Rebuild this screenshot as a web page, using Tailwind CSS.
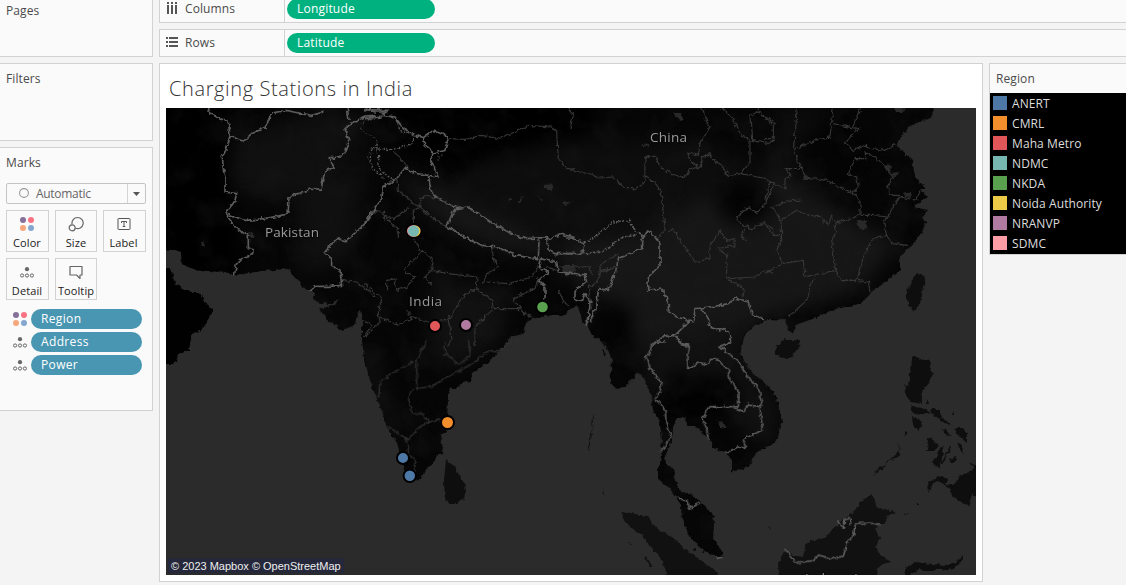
<!DOCTYPE html>
<html lang="en">
<head>
<meta charset="utf-8">
<title>Charging Stations in India</title>
<script src="https://cdn.jsdelivr.net/npm/@tailwindcss/browser@4"></script>
</head>
<body class="w-[1126px] h-[585px] overflow-hidden bg-[#f4f4f4] font-['Open_Sans','Noto_Sans',sans-serif] text-[12px] leading-4 text-[#4a4a4a]">
<svg class="hidden">
  <symbol id="dots4" viewBox="0 0 16 16"><circle cx="4" cy="4" r="3" fill="#85719a"/><circle cx="12" cy="4" r="3" fill="#fb7282"/><circle cx="4" cy="12" r="3" fill="#f5a77c"/><circle cx="12" cy="12" r="3" fill="#84a6cf"/></symbol>
  <symbol id="detail" viewBox="0 0 14 11"><circle cx="7" cy="2.2" r="2.1" fill="#666"/><g fill="none" stroke="#666"><circle cx="2.1" cy="8.5" r="1.6"/><circle cx="7" cy="8.5" r="1.6"/><circle cx="11.9" cy="8.5" r="1.6"/></g></symbol>
</svg>
<div class="flex h-full">
  <aside class="flex flex-col gap-1.5 w-[153px] shrink-0 tracking-[0.1px]">
    <section class="h-[57px] border-r border-b border-[#d2d2d2] bg-[#fafafa] pl-1.5 pt-[3px]">Pages</section>
    <section class="h-[78px] border border-l-0 border-[#d2d2d2] bg-[#fafafa] pl-1.5 pt-[7px]">Filters</section>
    <section class="h-[264px] border border-l-0 border-[#d2d2d2] bg-[#fafafa] pl-1.5 pt-[7px]">
      <h2>Marks</h2>
      <div class="mt-3 flex h-[21px] w-[140px] items-center rounded-xs border border-[#c4c4c4] text-[#666]">
        <svg class="ml-3 size-[11px]" viewBox="0 0 11 11"><circle cx="5" cy="5" r="4.4" fill="none" stroke="#999" stroke-width="1.1"/></svg>
        <span class="ml-1.5 flex-1 tracking-[-0.3px] pt-px">Automatic</span>
        <span class="flex h-full w-[18px] items-center justify-center border-l border-[#d4d4d4]"><svg class="w-[7px] h-1" viewBox="0 0 7 4"><path d="M0 0h7L3.5 4z" fill="#555"/></svg></span>
      </div>
      <div class="mt-1.5 grid grid-cols-[43px_42px_43px] gap-x-1.5 gap-y-1.5 text-[11px] text-[#222] text-center tracking-[0.1px]">
        <div class="h-[42px] border border-[#d2d2d2] flex flex-col items-center pt-[5px] pr-px"><svg class="size-4 shrink-0"><use href="#dots4"/></svg><span class="mt-[3px]">Color</span></div>
        <div class="h-[42px] border border-[#d2d2d2] flex flex-col items-center pt-[5px]"><svg class="size-4 shrink-0" viewBox="0 0 16 16" fill="none" stroke="#666" stroke-width="1.2"><path d="M4.1 8.3A5.6 5.6 0 1 1 7.5 12.3"/><circle cx="4.2" cy="11.8" r="3"/></svg><span class="mt-[3px]">Size</span></div>
        <div class="h-[42px] border border-[#d2d2d2] flex flex-col items-center pt-[5px] pr-[2px]"><svg class="size-4 shrink-0" viewBox="0 0 16 16" fill="none" stroke="#555"><rect x="2" y="2.5" width="12" height="11" rx=".6"/><path d="M5.5 7V5.5h5V7M8 5.5v5M6.7 10.5h2.6"/></svg><span class="mt-[3px]">Label</span></div>
        <div class="h-[42px] border border-[#d2d2d2] flex flex-col items-center pt-2 pr-px"><svg class="w-[14px] h-[11px] shrink-0"><use href="#detail"/></svg><span class="mt-[5px]">Detail</span></div>
        <div class="h-[42px] border border-[#d2d2d2] flex flex-col items-center pt-[5px]"><svg class="size-4 shrink-0" viewBox="0 0 16 16" fill="none" stroke="#666" stroke-width="1.2"><path d="M2 2.5h12v8.5h-2v3.5L8.5 11H2z" stroke-linejoin="round"/></svg><span class="mt-[3px]">Tooltip</span></div>
      </div>
      <div class="mt-[9px] flex flex-col gap-[3px] text-white font-medium tracking-[0.35px]">
        <div class="flex h-5 items-center"><svg class="ml-1.5 size-4"><use href="#dots4"/></svg><span class="ml-[3px] w-[111px] h-5 rounded-full bg-[#4996b2] pl-2.5 pt-[2px]">Region</span></div>
        <div class="flex h-5 items-center"><svg class="ml-[7px] mr-px w-[14px] h-[11px]"><use href="#detail"/></svg><span class="ml-[3px] w-[111px] h-5 rounded-full bg-[#4996b2] pl-2.5 pt-[2px]">Address</span></div>
        <div class="flex h-5 items-center"><svg class="ml-[7px] mr-px w-[14px] h-[11px]"><use href="#detail"/></svg><span class="ml-[3px] w-[111px] h-5 rounded-full bg-[#4996b2] pl-2.5 pt-[2px]">Power</span></div>
      </div>
    </section>
  </aside>
  <div class="ml-1.5 flex flex-1 flex-col">
    <div class="flex h-[23px] border-l border-b border-[#d2d2d2] bg-[#fafafa]">
      <div class="flex w-[125px] border-r border-[#d2d2d2] pt-px pl-[6px]"><svg class="mt-px size-3" viewBox="0 0 12 12" fill="#555"><path d="M1 0h2v2H1zM5 0h2v2H5zM9 0h2v2H9zM1 3h2v9H1zM5 3h2v9H5zM9 3h2v9H9z"/></svg><span class="ml-[7px] tracking-[0.1px]">Columns</span></div>
      <div class="ml-0.5 -mt-px h-5 w-[148px] rounded-full bg-[#00b180] pl-2.5 pt-[2px] font-medium tracking-[0.2px] text-white">Longitude</div>
    </div>
    <div class="mt-1.5 flex h-7 border border-r-0 border-[#d2d2d2] bg-[#fafafa]">
      <div class="flex w-[125px] border-r border-[#d2d2d2] pt-[5px] pl-1.5"><svg class="mt-[2px] w-3 h-[10px]" viewBox="0 0 12 10" fill="#555"><path d="M0 0h2v2H0zM0 4h2v2H0zM0 8h2v2H0zM3 0h9v2H3zM3 4h9v2H3zM3 8h9v2H3z"/></svg><span class="ml-[7px] tracking-[0.1px]">Rows</span></div>
      <div class="ml-0.5 mt-[3px] h-5 w-[148px] rounded-full bg-[#00b180] pl-2.5 pt-[2px] font-medium tracking-[0.2px] text-white">Latitude</div>
    </div>
    <div class="mt-1.5 flex">
      <main class="h-[519px] w-[824px] border border-[#d2d2d2] bg-white pl-1.5">
        <h1 class="h-11 pl-[3px] pt-[13px] text-[20px] font-light leading-6 tracking-[0.62px] text-[#333]">Charging Stations in India</h1>
        <div class="relative w-[810px] h-[467px]">
<svg class="block w-[810px] h-[467px]" viewBox="166 108 810 467">
<defs>
<filter id="rough" color-interpolation-filters="sRGB" filterUnits="userSpaceOnUse" x="160" y="100" width="822" height="482"><feTurbulence type="fractalNoise" baseFrequency=".22" numOctaves="2" seed="4"/><feDisplacementMap in="SourceGraphic" scale="5" xChannelSelector="R" yChannelSelector="G"/></filter>
<filter id="soft" color-interpolation-filters="sRGB" filterUnits="userSpaceOnUse" x="100" y="50" width="950" height="600"><feGaussianBlur stdDeviation="9"/></filter>
<filter id="relief" color-interpolation-filters="sRGB" filterUnits="userSpaceOnUse" x="166" y="108" width="810" height="467"><feTurbulence type="fractalNoise" baseFrequency=".035" numOctaves="4" seed="8"/><feColorMatrix values="0 0 0 0 .1  0 0 0 0 .1  0 0 0 0 .1  3 0 0 0 -1.35"/></filter>
<clipPath id="land"><use href="#mainland"/></clipPath>
<path id="mainland" d="M160 100V250H166L175 250 181 252 182 264 193 269 208 271 225 272 235 275 262 271 288 269 293 274 295 279 301 280 302 288 310 290 315 294 313 299 320 304 332 304 338 300 335 305 319 309 328 320 342 330 355 325 357 314 360 311 362 320 362 334 362 340 364 357 369 377 374 392 380 406 387 427 397 443 400 453 405 470 410 478 417 480 423 476 425 470 433 465 437 455 443 453 441 435 446 432 448 400 448 392 452 388 457 388 462 383 471 381 472 373 488 363 505 345 510 337 523 334 525 324 532 319 552 315 565 315 570 309 578 306 582 320 587 325 593 337 605 342 612 360 610 383 617 389 625 387 638 373 645 380 651 395 653 410 660 423 662 440 661 452 660 463 657 470 657 478 668 487 677 498 681 507 682 520 692 540 708 553 722 558 723 553 713 537 714 523 712 513 703 505 693 495 682 493 677 485 673 468 666 465 665 455 672 440 673 427 677 418 686 417 687 426 695 426 703 433 710 440 713 448 725 452 732 460 732 473 750 465 757 452 774 443 778 438 782 422 778 403 772 390 765 383 752 373 740 355 742 345 745 334 755 325 768 319 785 320 788 329 793 335 795 325 815 318 832 310 862 303 872 292 888 280 900 270 900 257 912 245 922 232 927 222 922 217 928 210 913 207 920 202 927 197 920 189 927 189 915 177 912 160 895 145 908 127 932 117 934 100Z"/>
</defs>
<rect x="160" y="100" width="820" height="480" fill="#2b2b2b"/>
<g filter="url(#rough)">
<use href="#mainland" fill="#060606"/>
<path fill="#010101" d="M160 262L172 272 175 283 185 290 200 294 206 303 213 309 210 316 202 330 192 334 189 350 178 354 176 362 173 364H160Z"/>
<g fill="#0e0e0e">
<path d="M446 460L450 463 455 467 460 477 465 485 466 492 463 500 457 504 449 504 445 499 444 480Z"/>
<path d="M917 274L926 276 922 292 920 303 914 313 907 302 907 292 911 282Z"/>
<path d="M776 346L784 340 800 340 799 347 792 356 784 359 776 355Z"/>
<g fill="#111"><path d="M621 511L640 515 648 516 658 529 675 539 684 548 693 555 705 563 718 573 716 580H668L664 565 659 555 650 547 643 535 633 530 625 522Z"/>
<path d="M779 580L778 562 785 553 803 557 806 542 824 538 838 524 854 512 862 500 872 495 877 508 886 509 896 513 887 517 885 523 875 528 880 539 876 547 881 555 891 562 879 565 876 580Z"/>
<path d="M644 557l3 1 6 8-3 1zM702 550h3v3h-3zM626 541l6 3-1 1zM768 526l3 3-1 2zM693 548h4v3h-4z"/></g>
<path d="M911 357L917 356 922 361 931 359 930 369 933 374 930 382 922 391 922 404 911 402 907 397 904 384 909 386 910 373Z"/>
<path d="M912 407l10 1 8 4-10 3-8-3zM912 417l8 2 2 8-4 3-5-6zM930 409l8 0 4 8 9 8-7-2-7-6-5-3zM955 428l8 0 4 6 0 9-6-5-4-4zM928 437l5 3 6 6-5 5-7 0zM940 448l4-2-2 11-3 12-7-7 5-5zM950 446l1 2-8 16-2-1zM949 459l7-2 0 4-5 1zM942 428l5 3 4 5-6-2zM957 442l4 1 3 11-3-2zM953 411l2 5-3 0zM926 399l2 4-2 1zM968 462l9 4v4z"/>
<path d="M873 475l8-8 8-6 11-11-2-7 2 12-10 6-8 8zM904 431l4 2-4 3z"/>
<path d="M929 493L928 483 936 478 942 476 948 480 946 484 954 485 960 475 970 472 978 464V500L972 493 969 505 958 502 952 495 950 488 940 482 933 483Z"/>
<path d="M905 575l2-10 10-3 14 2 18 1 7-3 7-7 0 4-8 9-17 2-18 0-9 4-3 7z"/>
<path d="M593 416l1 3-2 10-2 11-2 12 0-9 4-15zM603 490l2 3-1 2zM444 461l5 1v1zM905 513l3 0v1l-4 1zM917 504h2v1h-2z"/>
<path d="M602 341l3 4M603 350l2 5" stroke="#0b0b0b" stroke-width="2"/>
</g>
</g>
<g clip-path="url(#land)"><g filter="url(#soft)">
<path fill="#000" d="M140 90H225L235 215 240 275H160ZM390 100H600L580 140 460 170 400 145Z"/>
<path fill="#101010" d="M232 140L320 110 370 120 330 180 280 200 230 190ZM295 195L350 170 370 140 350 260 300 275Z"/>
<path fill="#0d0d0d" d="M440 200L480 160 560 140 700 140 760 170 780 110 830 110 800 180 720 200 660 250 540 235Z"/>
<path fill="#171717" d="M415 180L440 190 480 210 545 240 560 255 530 255 470 240 430 215 390 170ZM560 240H640L700 200 780 170 870 230 900 240 860 290 740 325 700 350 640 360 620 310 560 270Z"/>
<path fill="#111" d="M430 280L510 290 500 340 450 370 430 350ZM372 345L400 440 390 445 360 360ZM640 340L760 320 740 350 780 410 770 445 750 440 700 370 650 400Z"/>
<ellipse cx="745" cy="202" rx="28" ry="23" fill="#030303"/><ellipse cx="835" cy="155" rx="38" ry="35" fill="#040404"/><ellipse cx="622" cy="325" rx="10" ry="24" fill="#010101"/><path d="M670 370L740 380 740 405 690 420 665 400Z" fill="#020202"/>
</g>
<rect x="166" y="108" width="810" height="467" filter="url(#relief)" opacity=".3"/></g>

<g filter="url(#rough)" fill="none" stroke-linejoin="round">
<!-- lakes -->
<g fill="#292929"><path d="M673 113l8 0 3 7-4 1zM642 144l7 1v2l-6-1zM544 185l9-1-1 6-8-1zM562 203l10-2-6 4zM508 197l5 1-4 3zM518 202l4-6 1 1-3 5zM536 195l7 5-1 1zM857 220l9 1 1 6-5 3-4-4zM883 164l9 1-2 6-6-2zM904 193l6-2 1 7-6-1zM891 173l7-1-3 6zM822 218l4 2-3 6zM894 108h11l-3 4-6 0zM803 175h5v4h-4zM246 234l6-1 3 4-6 0zM202 243l3-1-1 6zM562 190l10 0zM717 420l7 3 3 6-6-2zM560 266l15 0 1 5-12 2zM407 311l5 1-4 5z"/></g>
<!-- national borders -->
<g stroke="#5c5c5c">
<g transform="translate(165 107) scale(.3333)" stroke-width="5"><path d="M130 0L135 20 155 28 170 40 190 42 195 88 185 125 172 150 175 185 180 215 180 255 215 260 210 280 182 320 240 340 300 335 365 322 370 310 372 275 390 262 425 255 430 243 468 247 480 190 508 183 492 152 530 150 552 105 540 65 565 45 600 30 630 28M195 88L235 103 260 80 300 62 320 18 365 10 410 20 440 25 475 15M182 320L215 365 250 385 250 422 265 428 260 445 235 450 215 470 208 505M432 552L450 538 495 538 530 535 525 490 500 475 500 455 478 437 515 395 545 402 600 350 610 325 632 310M547 0L552 42M600 5L630 15"/></g>
<g transform="translate(365 107) scale(.3333)" stroke-width="5"><path d="M0 8L70 10 50 25 90 30 115 65 150 85 175 92 205 70 250 90 240 130 205 138 180 115 175 92M205 138L195 160 210 185 220 210 190 205 155 200 120 183 95 215 55 240 50 275 0 350M30 15H70M0 35L50 30M190 210L200 255 215 270 275 305 310 300 385 350 430 375 480 395 545 392 550 430 570 440 630 440M275 305L262 320 245 360 300 390 350 415 400 420 450 445 520 455 522 400M545 400L565 390 590 382 630 392M520 455L575 465 580 495 630 500M525 460L520 480 550 495 520 520 540 540 540 575M575 465L580 495"/><path stroke-dasharray="6 5" stroke-width="3.8" d="M20 125L80 128 140 110 150 90M20 125L18 180 60 215M35 100L40 185 85 220M90 30L105 70 150 88M205 138L230 145 215 160"/></g>
<g transform="translate(565 107) scale(.3333)" stroke-width="5"><path d="M50 440L58 410 20 393H0M50 440H0M0 502L60 503 65 525 30 550 30 580 50 583 60 560 75 590 70 640 60 655M80 650L80 620 95 610 100 545 130 550 150 500 160 455 230 425 230 400 248 372 262 380 285 410 285 475 250 510 248 550 290 543 310 585 310 610 335 630 370 640 365 650 330 685 290 690 260 718M365 640L385 645 390 605 410 603 450 598 490 590 510 573 550 585 560 620 600 638M410 603L430 635 435 660 460 670 480 665 500 695 480 718M330 685L350 710 370 715"/><path d="M58 410L95 385 145 345 195 340 208 370 240 390M50 440L110 435 175 390 215 385" stroke-dasharray="8 4"/></g>
<g transform="translate(565 340) scale(.3333)" stroke-width="5"><path d="M300 5L260 8 255 40 242 50 255 85 290 130 285 155 270 175 300 210 303 240 318 290 288 335M345 0L350 15 370 18 368 88 405 65 425 75 450 52 490 90 495 120 522 155 520 200 435 200 412 235 425 265 430 298M500 5L465 18 520 65 560 125 580 145 592 185 585 200 550 195 535 215 510 205M585 200L592 270 535 298 542 325 520 320 480 340M335 470L370 485 372 505 405 488M455 655L472 652"/></g>
<g transform="translate(765 340) scale(.3333)" stroke-width="5"><path d="M60 628L95 670 150 660 160 645 200 657 235 648 250 600 265 590 272 550 330 550 345 557M217 545L235 562 240 538 255 535 258 552"/></g>
</g>
<!-- internal borders -->
<g stroke="#363636" stroke-width="3.5">
<g transform="translate(365 107) scale(.3333)"><path d="M250 95L300 97 350 85 400 95 450 75 490 55 560 60 575 75 580 155 610 188 630 185M80 130L110 155 130 185M95 215L100 250 145 290 165 300 200 330 245 360M165 300L165 275 190 265 250 290M165 300L145 310 145 350 150 400 170 435 120 485 125 500 150 510 125 540 95 550 90 515 65 520 65 550M55 320L85 335 135 300M55 320L100 370 100 395M20 315H55L60 340M170 435L205 455 200 490 250 500 335 510 335 545 380 580 385 605 460 605 500 630M200 490L180 510 200 535M380 420L385 450 400 480 365 500 355 530M365 525L430 530 500 510 520 480M520 510L510 545 445 575 480 625M0 530L50 575 40 620 45 645 0 690M45 630L100 655 145 630 190 645 250 640 300 560 335 545M250 640L260 690 250 718M380 610L330 660 330 718M545 480L575 490M580 550L600 590 615 600"/></g>
<g transform="translate(565 107) scale(.3333)"><path d="M0 185L50 195 105 213 145 210 180 245 215 245 240 225 240 205 275 230 290 265 300 370 280 395M240 205L240 155 260 145 275 155 285 180 320 200 350 210 370 205 375 185 410 180 410 150 435 140 440 155 470 175 490 205 530 200 540 185 555 165 555 100 520 75 505 35 470 3M410 0L420 30 435 60 405 110 400 145 365 135 375 160 400 180M530 200L600 215 628 230 600 290 575 320 550 300 515 330 530 355 560 365 600 345 628 370M310 375L325 365 345 400 390 465 435 455 435 420 465 370 485 400 510 395 510 415 460 425 485 445 485 515 540 545 530 570M490 515L570 510 600 490 628 500M540 365L530 385 545 405M580 0V15L555 25 560 100 610 110 630 95M580 15L625 45M10 0L25 25 15 65M0 475L75 480 80 505M80 610L70 540 95 530 110 490 150 480 100 500 110 470 160 440"/></g>
<g transform="translate(765 107) scale(.3333)"><path d="M97 0L92 60 85 128 150 100 195 90 205 0M85 128L110 185 60 185 80 205 60 215 60 245 15 225 0 290M110 185L120 210 185 220 245 250 260 255 285 280 285 325 320 325 370 330 385 300 405 270 455 280 465 250M205 50L262 62 285 5M262 62L282 65 240 105 265 130 300 115 320 125 360 130 390 110M265 255L280 240 275 210 250 200 270 155 305 155 300 135 350 165 385 210 365 240 380 265 405 265M20 300L80 280 110 280M20 300L48 340 95 310 130 325 175 330 190 355 200 325 210 350 285 325M210 350L215 375 200 400 212 490 120 510 115 460 50 470 0 500M48 340L50 400 35 430 55 470M212 490L225 520 275 520 295 450 320 400 365 385 355 340 370 330M365 385L380 410 430 415M275 520L310 525 315 555M145 515L125 580 70 630M0 35L25 50V95H0M0 350L25 385 45 385"/></g>
<g transform="translate(365 340) scale(.3333)"><path d="M185 0L155 60 90 95 45 125 40 175M155 60L155 145 200 140 260 105 325 70 365 35 400 35 440 0M240 5L240 40 285 75 315 45 310 0M145 145L130 175 140 220 175 220 190 245 160 265 130 300 70 260M190 245L225 240M120 295L130 320 130 345 150 355 150 395"/></g>
<g transform="translate(165 107) scale(.3333)"><path d="M530 520L575 525 605 545 630 570M595 640L620 655 595 690"/><path stroke-dasharray="5 4" d="M630 38H600L585 65 630 95M620 120L610 150 625 190"/></g>
</g>
</g>
<g fill="#999" font-family="Open Sans, Noto Sans, sans-serif" font-size="13.5" font-weight="500" stroke="#090909" stroke-width="2" paint-order="stroke">
<text x="265" y="236.5" textLength="54">Pakistan</text><text x="409" y="305.5" textLength="33">India</text><text x="650" y="141.5" textLength="37">China</text><text x="805" y="583" textLength="60">Indonesia</text></g>
<g stroke="#000" stroke-width="2">
<circle cx="413" cy="231" r="6.8" fill="#ff9da7"/><circle cx="414.8" cy="231" r="6.8" fill="#edc948"/><circle cx="412.9" cy="231" r="5.8" fill="#ff9da7" stroke="none"/><circle cx="413.6" cy="231" r="5.6" fill="#76b7b2" stroke="none"/>
<circle cx="435" cy="326" r="6" fill="#e15759"/><circle cx="466" cy="325" r="6" fill="#b07aa1"/><circle cx="542.5" cy="307" r="6.3" fill="#59a14f"/>
<circle cx="447.5" cy="422.5" r="6.5" fill="#f28e2b"/><circle cx="403" cy="458" r="6" fill="#4e79a7"/><circle cx="409.8" cy="475.8" r="6.2" fill="#4e79a7"/></g>
</svg>
<div class="absolute left-0.5 bottom-0.5 h-[15px] w-[176px] bg-[#25283a] pl-[3px] font-['Liberation_Sans',sans-serif] text-[11px] leading-[16px] whitespace-nowrap text-[#eee]">© 2023 Mapbox © OpenStreetMap</div>
        </div>
      </main>
      <aside class="ml-1.5 h-[192px] flex-1 border border-r-0 border-[#d2d2d2] bg-[#fafafa]">
        <h2 class="h-[29px] pl-1.5 pt-[7px] tracking-[0.1px]">Region</h2>
        <ul class="h-[161px] bg-black pl-[3px] text-[#ddd] tracking-[0.1px]">
          <li class="flex h-5 items-center gap-[5px]"><i class="size-3.5 bg-[#4e79a7]"></i><span class="pt-[2px]">ANERT</span></li>
          <li class="flex h-5 items-center gap-[5px]"><i class="size-3.5 bg-[#f28e2b]"></i><span class="pt-[2px]">CMRL</span></li>
          <li class="flex h-5 items-center gap-[5px]"><i class="size-3.5 bg-[#e15759]"></i><span class="pt-[2px]">Maha Metro</span></li>
          <li class="flex h-5 items-center gap-[5px]"><i class="size-3.5 bg-[#76b7b2]"></i><span class="pt-[2px]">NDMC</span></li>
          <li class="flex h-5 items-center gap-[5px]"><i class="size-3.5 bg-[#59a14f]"></i><span class="pt-[2px]">NKDA</span></li>
          <li class="flex h-5 items-center gap-[5px]"><i class="size-3.5 bg-[#edc948]"></i><span class="pt-[2px]">Noida Authority</span></li>
          <li class="flex h-5 items-center gap-[5px]"><i class="size-3.5 bg-[#b07aa1]"></i><span class="pt-[2px]">NRANVP</span></li>
          <li class="flex h-5 items-center gap-[5px]"><i class="size-3.5 bg-[#ff9da7]"></i><span class="pt-[2px]">SDMC</span></li>
        </ul>
      </aside>
    </div>
  </div>
</div>
</body>
</html>
